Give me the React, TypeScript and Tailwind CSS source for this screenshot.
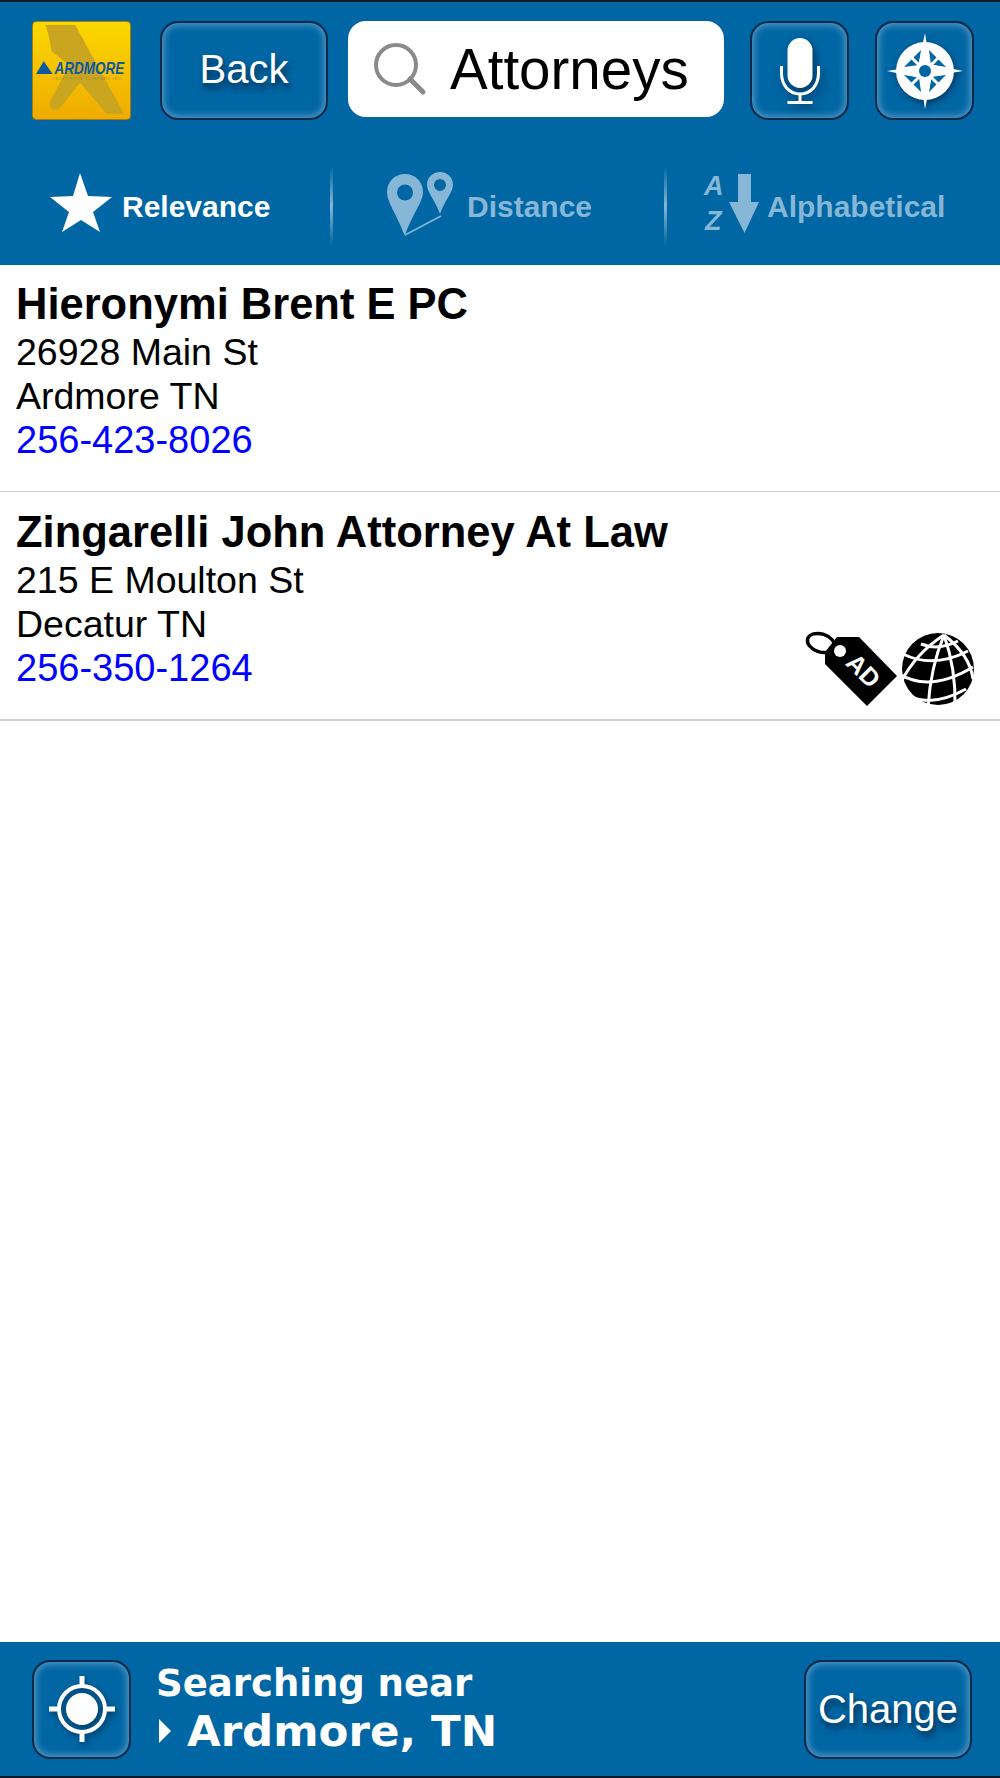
import React from 'react';

const glowButton =
    'flex items-center justify-center h-[99px] rounded-[18px] border-2 border-[#0c2a4a] bg-[#0066a4] shadow-[inset_0_0_7px_2px_rgba(190,220,240,0.45)]';

const LogoTile: React.FC = () => (
    <div className="w-[99px] h-[99px] shrink-0 rounded-[4px] border border-[#a87a10] bg-gradient-to-b from-[#fbd800] to-[#efab00]">
        <svg viewBox="0 0 99 99" className="w-full h-full">
            <path d="M13 3H43L93 94H78C75 94 74 93 72 90L48 62L28 87C24 92 14 90 18 80L37 44L19 30L16 14Z" fill="#c9a520" />
            <polygon points="3,53 11,40 20,53" fill="#0b5aa0" />
            <text x="22" y="53" fontFamily="'Liberation Sans', sans-serif" fontWeight="700" fontStyle="italic" fontSize="16" textLength="71" lengthAdjust="spacingAndGlyphs" fill="#0b5aa0">ARDMORE</text>
            <text x="20" y="59" fontFamily="'Liberation Sans', sans-serif" fontSize="4" textLength="72" lengthAdjust="spacing" fill="#a98d2c">TELEPHONE COMPANY INC.</text>
        </svg>
    </div>
);

const MicIcon: React.FC = () => (
    <svg width="44" height="66" viewBox="0 0 44 66" className="drop-shadow-[3px_4px_4px_rgba(0,30,60,0.6)]">
        <rect x="9.500" y="0" width="25" height="50" rx="12.500" fill="white" />
        <path d="M3.500 28V35C3.500 47 11 56 22 56C33 56 40.500 47 40.500 35V28" fill="none" stroke="white" strokeWidth="3" />
        <path d="M22 56V64" stroke="white" strokeWidth="3" />
        <path d="M9.500 64.500H34.500" stroke="white" strokeWidth="3" />
    </svg>
);

const CompassIcon: React.FC = () => (
    <svg width="80" height="80" viewBox="-40 -40 80 80" className="drop-shadow-[2px_3px_3px_rgba(0,30,60,0.6)]">
        <circle r="29" fill="white" />
        {/* blue cut-outs sitting between the long points */}
        <path d="M6 -6L4 -21L21 -4Z" fill="#0066a4" />
        <path d="M-6 -6L-4 -21L-21 -4Z" fill="#0066a4" />
        <path d="M6 6L4 21L21 4Z" fill="#0066a4" />
        <path d="M-6 6L-4 21L-21 4Z" fill="#0066a4" />
        <path d="M17 -17L6 -6M-17 -17L-6 -6M17 17L6 6M-17 17L-6 6" stroke="white" strokeWidth="3" />
        <path d="M0 -38L5 -7L38 0L7 5L0 38L-5 7L-38 0L-7 -5Z" fill="white" />
        <circle r="10" fill="white" />
        <circle r="6" fill="#0066a4" />
    </svg>
);

const LocateIcon: React.FC = () => (
    <svg width="70" height="70" viewBox="-35 -35 70 70" className="drop-shadow-[2px_3px_3px_rgba(0,30,60,0.6)]">
        <circle r="23" fill="none" stroke="white" strokeWidth="4" />
        <circle r="16" fill="white" />
        <path d="M0 -33V-24M0 24V33M-33 0H-24M24 0H33" stroke="white" strokeWidth="5" />
    </svg>
);

const SearchIcon: React.FC = () => (
    <svg width="56" height="56" viewBox="0 0 56 56" className="shrink-0">
        <circle cx="24" cy="24" r="20" fill="none" stroke="#8a8a8a" strokeWidth="4" />
        <path d="M38 38L51 51" stroke="#8a8a8a" strokeWidth="5" strokeLinecap="round" />
    </svg>
);

const StarIcon: React.FC = () => (
    <svg width="62" height="60" viewBox="0 0 62 60" className="shrink-0 -mt-[6px]">
        <polygon points="30,0 38,23 62,24 43,39 50,59 31,47 12,59 19,39 0,24 23,23" fill="white" />
    </svg>
);

const PinsIcon: React.FC = () => (
    <svg width="70" height="68" viewBox="0 0 70 68" className="shrink-0 -mt-[4px]">
        <path fillRule="evenodd" d="M20 4C9.500 4 2 12 2 22C2 32 11 43 19 64L20 65C28 43 38 32 38 22C38 12 30.500 4 20 4ZM20 14.500A8 8 0 1 1 20 30.500A8 8 0 1 1 20 14.500Z" fill="#86b7d6" />
        <path fillRule="evenodd" d="M55 2C47.500 2 42 7.500 42 15C42 22 50 30 55 44C60 30 68 22 68 15C68 7.500 62.500 2 55 2ZM55 9A6 6 0 1 1 55 21A6 6 0 1 1 55 9Z" fill="#86b7d6" />
        <path d="M20 65L56 46" stroke="#86b7d6" strokeWidth="1.500" />
    </svg>
);

const AzArrowIcon: React.FC = () => (
    <svg width="56" height="60" viewBox="0 0 56 60" className="shrink-0 -mt-[4px] overflow-visible">
        <text x="0" y="21" fontFamily="'Liberation Sans', sans-serif" fontWeight="700" fontStyle="italic" fontSize="27" fill="#86b7d6">A</text>
        <text x="1" y="56" fontFamily="'Liberation Sans', sans-serif" fontWeight="700" fontStyle="italic" fontSize="27" fill="#86b7d6">Z</text>
        <path d="M34 0H47V28H55L40.500 59L25 28H34Z" fill="#86b7d6" />
    </svg>
);

const AdTagIcon: React.FC = () => (
    <svg width="96" height="80" viewBox="0 0 96 80">
        <ellipse cx="19" cy="14" rx="14" ry="9" transform="rotate(18 19 14)" fill="none" stroke="black" strokeWidth="3.500" />
        <path d="M35 8H57L95 47L65 77L23 35V23Z" fill="black" />
        <circle cx="38" cy="22" r="6" fill="white" />
        <text x="60" y="43" transform="rotate(45 60 43)" textAnchor="middle" dominantBaseline="middle" fontFamily="'Liberation Sans', sans-serif" fontWeight="700" fontSize="25" fill="white">AD</text>
    </svg>
);

const GlobeIcon: React.FC = () => (
    <svg width="76" height="76" viewBox="-38 -38 76 76">
        <circle r="36" fill="black" />
        <g fill="none" stroke="white" strokeWidth="3">
            <path d="M-17 -25Q0 -18 20 -28" />
            <path d="M-35 -15Q-5 0 30 -18" />
            <path d="M-39 5Q-8 24 35 -2" />
            <path d="M-32 25Q-8 40 28 20" />
            <path d="M6 -34Q-8 0 -10 40" />
            <path d="M6 -34Q18 0 17 37" />
            <path d="M6 -34Q-22 -16 -37 13" />
            <path d="M6 -34Q32 -14 35 10" />
        </g>
    </svg>
);

interface ListingProps {
    name: string;
    street: string;
    city: string;
    phone: string;
    extras?: boolean;
}

const Listing: React.FC<ListingProps> = ({ name, street, city, phone, extras }) => (
    <div className={`relative border-[#cfcfcf] pl-[16px] ${extras ? 'h-[229px] border-b-2 pt-[15px]' : 'h-[227px] border-b pt-[14px]'}`}>
        <div className="text-[43.500px] leading-[51px] font-bold text-black">{name}</div>
        <div className="text-[37.500px] leading-[44px] text-black">{street}</div>
        <div className="text-[37.500px] leading-[44px] text-black">{city}</div>
        <div className="text-[38px] leading-[44px] text-[#0000ff]">{phone}</div>
        {extras && (
            <div className="absolute right-[24px] bottom-[10px] flex items-center gap-[2px]">
                <AdTagIcon />
                <GlobeIcon />
            </div>
        )}
    </div>
);

const Divider: React.FC = () => (
    <div className="w-[3px] h-[80px] shrink-0 bg-gradient-to-b from-transparent via-[#86b7d6] to-transparent" />
);

const App: React.FC = () => {
    return (
        <div className="h-[1778px] w-[1000px] flex flex-col bg-white font-['Liberation_Sans',sans-serif]">
            <header className="h-[265px] shrink-0 bg-[#0066a4] border-t-2 border-[#0a1a2a]">
                <div className="flex items-start pl-[32px] pt-[19px]">
                    <LogoTile />
                    <button className={`${glowButton} w-[168px] ml-[29px] pb-[4px] text-white text-[40px] [text-shadow:2px_5px_6px_rgba(0,30,60,0.8)]`}>Back</button>
                    <div className="ml-[20px] w-[376px] h-[96px] rounded-[18px] bg-white flex items-center pl-[24px] gap-[22px]">
                        <SearchIcon />
                        <span className="text-[56.500px] text-black leading-none pt-[2px]">Attorneys</span>
                    </div>
                    <button className={`${glowButton} w-[99px] ml-[26px]`}><MicIcon /></button>
                    <button className={`${glowButton} w-[99px] ml-[26px]`}><CompassIcon /></button>
                </div>
                <div className="flex items-center h-[80px] mt-[46px] text-[30px] font-bold">
                    <div className="w-[330px] flex items-center pl-[50px] gap-[10px] text-white">
                        <StarIcon />
                        <span>Relevance</span>
                    </div>
                    <Divider />
                    <div className="w-[331px] flex items-center pl-[52px] gap-[12px] text-[#86b7d6]">
                        <PinsIcon />
                        <span>Distance</span>
                    </div>
                    <Divider />
                    <div className="flex items-center pl-[37px] gap-[7px] text-[#86b7d6]">
                        <AzArrowIcon />
                        <span>Alphabetical</span>
                    </div>
                </div>
            </header>

            <main className="flex-1 min-h-0">
                <Listing name="Hieronymi Brent E PC" street="26928 Main St" city="Ardmore TN" phone="256-423-8026" />
                <Listing name="Zingarelli John Attorney At Law" street="215 E Moulton St" city="Decatur TN" phone="256-350-1264" extras />
            </main>

            <footer className="h-[136px] shrink-0 bg-[#0066a4] border-b-2 border-[#0a1a2a] flex items-center pl-[32px] pr-[28px]">
                <button className={`${glowButton} w-[99px]`}><LocateIcon /></button>
                <div className="ml-[25px] flex-1 text-white font-['DejaVu_Sans',sans-serif] font-bold">
                    <div className="text-[37px] leading-[44px]">Searching near</div>
                    <div className="flex items-center text-[43.500px] leading-[50px]">
                        <span className="w-0 h-0 border-y-[12px] border-y-transparent border-l-[12px] border-l-white ml-[3px] mr-[16px]" />
                        <span>Ardmore, TN</span>
                    </div>
                </div>
                <button className={`${glowButton} w-[168px] text-white text-[40px] [text-shadow:2px_5px_6px_rgba(0,30,60,0.8)]`}>Change</button>
            </footer>
        </div>
    );
};

export default App;
